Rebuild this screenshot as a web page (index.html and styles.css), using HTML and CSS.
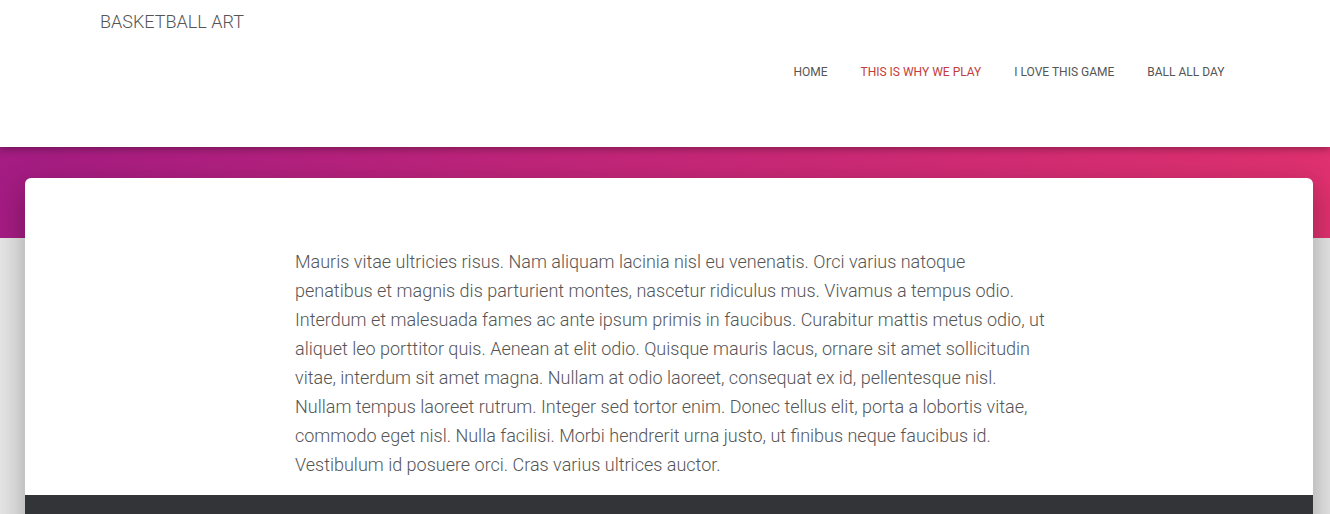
FILE: index.html
```html
<!DOCTYPE html>
<html>
<head>
<meta charset="utf-8">
<link rel="stylesheet" href="styles.css">
</head>
<body>
<header class="topbar">
  <div class="brand">BASKETBALL ART</div>
  <nav class="nav">
    <a class="nav-item">HOME</a>
    <a class="nav-item active">THIS IS WHY WE PLAY</a>
    <a class="nav-item">I LOVE THIS GAME</a>
    <a class="nav-item">BALL ALL DAY</a>
  </nav>
</header>
<div class="hero"></div>
<main class="main">
  <section class="card">
    <p class="text">Mauris vitae ultricies risus. Nam aliquam lacinia nisl eu venenatis. Orci varius natoque penatibus et magnis dis parturient montes, nascetur ridiculus mus. Vivamus a tempus odio. Interdum et malesuada fames ac ante ipsum primis in faucibus. Curabitur mattis metus odio, ut aliquet leo porttitor quis. Aenean at elit odio. Quisque mauris lacus, ornare sit amet sollicitudin vitae, interdum sit amet magna. Nullam at odio laoreet, consequat ex id, pellentesque nisl. Nullam tempus laoreet rutrum. Integer sed tortor enim. Donec tellus elit, porta a lobortis vitae, commodo eget nisl. Nulla facilisi. Morbi hendrerit urna justo, ut finibus neque faucibus id. Vestibulum id posuere orci. Cras varius ultrices auctor.</p>
    <div class="footer"></div>
  </section>
</main>
</body>
</html>
```
FILE: styles.css
```css
* { box-sizing: border-box; }
html, body { margin: 0; padding: 0; }
body {
  background: #e5e5e5;
  font-family: Roboto, "Liberation Sans", sans-serif;
  overflow: hidden;
  height: 514px;
}
.topbar {
  position: relative;
  z-index: 2;
  height: 147px;
  background: #fff;
  display: flex;
  justify-content: space-between;
  align-items: flex-start;
  padding: 0 89px 0 100px;
  box-shadow: 0 2px 8px rgba(0,0,0,0.35);
}
.brand {
  font-size: 18px;
  font-weight: 300;
  color: #555;
  line-height: 20px;
  margin-top: 12px;
}
.nav {
  display: flex;
  margin-top: 65px;
}
.nav-item {
  font-size: 12px;
  color: #555;
  line-height: 14px;
  padding: 0 16.5px;
}
.nav-item.active { color: #c33d3a; }
.hero {
  height: 91px;
  background: linear-gradient(100deg, #a41c83 0%, #c0257a 40%, #e0316f 100%);
}
.main {
  margin-top: -60px;
  padding: 0 17px 0 25px;
  position: relative;
  z-index: 1;
}
.card {
  background: #fff;
  border-radius: 6px 6px 0 0;
  box-shadow: 0 16px 24px 2px rgba(0,0,0,0.14), 0 6px 30px 5px rgba(0,0,0,0.12);
  overflow: hidden;
}
.text {
  margin: 0 auto;
  width: 752px;
  padding: 69px 0 16px 0;
  position: relative;
  left: 2px;
  font-size: 18px;
  font-weight: 300;
  line-height: 29px;
  color: #555;
}
.footer {
  height: 40px;
  background: #323437;
}
```
